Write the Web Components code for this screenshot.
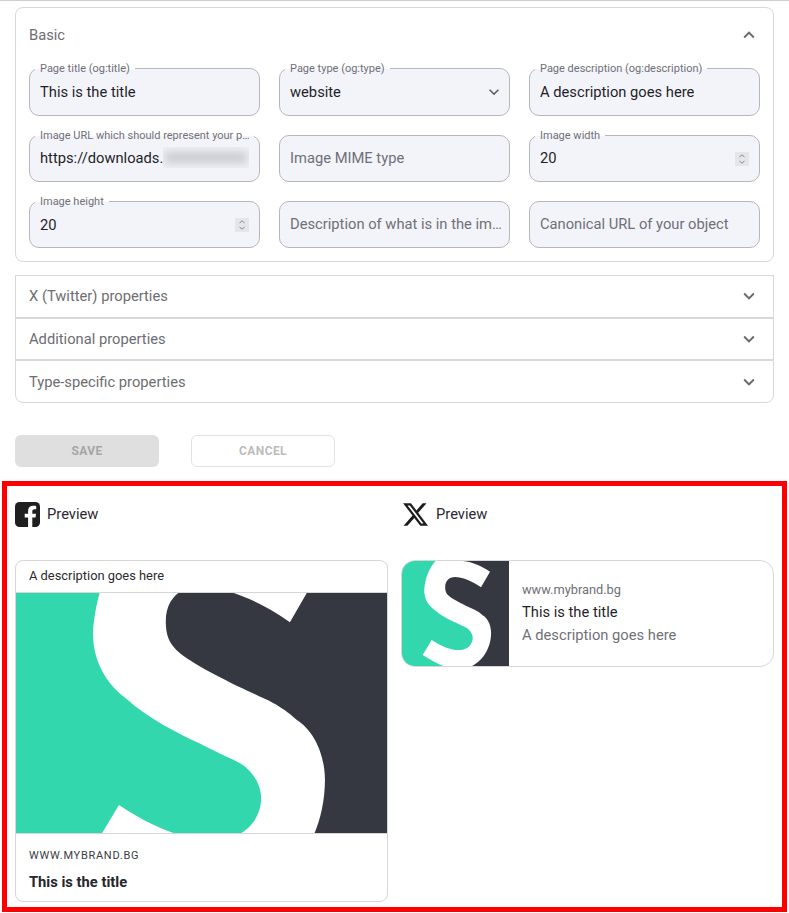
<!DOCTYPE html>
<html lang="en">
<head>
<meta charset="utf-8">
<title>Open Graph settings</title>
<style>
    body {
        margin: 0;
        background: #fff;
        color: #1f1f28;
        font-family: Roboto, "Liberation Sans", sans-serif;
        border-top: 1px solid #cfcfcf;
    }
</style>
</head>
<body>
<og-form>
    <og-panel heading="Basic" open class="solo">
        <og-grid>
            <og-field label="Page title (og:title)" value="This is the title"></og-field>
            <og-field label="Page type (og:type)" value="website" kind="select"></og-field>
            <og-field label="Page description (og:description)" value="A description goes here"></og-field>
            <og-field label="Image URL which should represent your page" value="https://downloads." kind="blurred"></og-field>
            <og-field placeholder="Image MIME type"></og-field>
            <og-field label="Image width" value="20" kind="number"></og-field>
            <og-field label="Image height" value="20" kind="number"></og-field>
            <og-field placeholder="Description of what is in the image"></og-field>
            <og-field placeholder="Canonical URL of your object"></og-field>
        </og-grid>
    </og-panel>
    <og-group>
        <og-panel heading="X (Twitter) properties"></og-panel>
        <og-panel heading="Additional properties"></og-panel>
        <og-panel heading="Type-specific properties" class="last"></og-panel>
    </og-group>
    <og-actions>
        <og-button kind="filled">SAVE</og-button>
        <og-button kind="outlined">CANCEL</og-button>
    </og-actions>
</og-form>
<og-previews>
    <og-preview network="facebook">
        <facebook-card url="WWW.MYBRAND.BG" card-title="This is the title" description="A description goes here"></facebook-card>
    </og-preview>
    <og-preview network="x">
        <x-card url="www.mybrand.bg" card-title="This is the title" description="A description goes here"></x-card>
    </og-preview>
</og-previews>

<script>
const CHEVRON_UP = "M12 8l-6 6 1.41 1.41L12 10.83l4.59 4.58L18 14z";
const CHEVRON_DOWN = "M16.59 8.59L12 13.17 7.41 8.59 6 10l6 6 6-6z";

// simple wrapper so the templates below stay short
function makeTemplate(html) {
    const template = document.createElement("template");
    template.innerHTML = html;
    return template;
}

class ShadowElement extends HTMLElement {
    constructor() {
        super();
        this.root = this.attachShadow({mode: "open"});
        this.root.appendChild(this.constructor.template.content.cloneNode(true));
    }
}

class OgForm extends ShadowElement {
    static template = makeTemplate(`
        <style>
            :host { display: block; margin: 6px 15px 0; }
        </style>
        <slot></slot>
    `);
}

class OgGroup extends ShadowElement {
    static template = makeTemplate(`
        <style>
            :host { display: block; margin-top: 13px; }
        </style>
        <slot></slot>
    `);
}

class OgPanel extends ShadowElement {
    static template = makeTemplate(`
        <style>
            :host {
                display: block;
                border: 1px solid #d8d8d8;
                background: #fff;
                height: 42.67px;
                box-sizing: border-box;
            }
            :host([open]) { height: 255px; padding-bottom: 13px; }
            :host(.solo) { border-radius: 8px; }
            :host(.last) { border-radius: 0 0 8px 8px; }
            header {
                display: flex;
                align-items: center;
                justify-content: space-between;
                box-sizing: border-box;
                height: 40.67px;
                padding: 1px 13px 0 13px;
                font-size: 14.72px;
                color: #6d6d72;
            }
            :host(:first-child) header { padding-top: 0; }
            :host([open]) header { height: 53px; margin-bottom: 7px; padding-top: 1px; }
            svg { width: 22px; height: 22px; fill: #68686d; }
            .body { display: none; padding: 0 13px; }
            :host([open]) .body { display: block; }
        </style>
        <header><span id="heading"></span><svg viewBox="0 0 24 24"><path id="chevron"></path></svg></header>
        <div class="body"><slot></slot></div>
    `);

    connectedCallback() {
        this.root.getElementById("heading").textContent = this.getAttribute("heading");
        this.root.getElementById("chevron").setAttribute("d", this.hasAttribute("open") ? CHEVRON_UP : CHEVRON_DOWN);
    }
}

class OgGrid extends ShadowElement {
    static template = makeTemplate(`
        <style>
            :host {
                display: grid;
                grid-template-columns: repeat(3, 231px);
                grid-template-rows: 48px 47px 47px;
                gap: 19px;
            }
        </style>
        <slot></slot>
    `);
}

class OgField extends ShadowElement {
    static template = makeTemplate(`
        <style>
            :host {
                display: flex;
                align-items: center;
                position: relative;
                box-sizing: border-box;
                padding: 0 10px;
                background: #f3f4fa;
                border: 1px solid #b6b6bd;
                border-radius: 10px;
                font-size: 14.72px;
                min-width: 0;
            }
            /* placeholders and the middle row sit a pixel higher */
            :host(:not([value])), :host(:nth-child(4)), :host(:nth-child(6)) { padding-bottom: 2px; }
            :host(:not([value])) { padding-right: 7px; }
            .label {
                position: absolute;
                top: -7px;
                left: 5px;
                max-width: calc(100% - 10px);
                box-sizing: border-box;
                padding: 0 5px;
                font-size: 11px;
                line-height: 13px;
                color: #6f6f78;
                white-space: nowrap;
                overflow: hidden;
                text-overflow: ellipsis;
                background: linear-gradient(#fff 7px, #f3f4fa 7px);
            }
            :host(:nth-child(4)) .label { padding-right: 1px; }
            .label:empty { display: none; }
            .text {
                flex: 0 1 auto;
                white-space: nowrap;
                overflow: hidden;
                text-overflow: ellipsis;
                color: #1f1f28;
            }
            :host([kind="blurred"]) .text { flex: none; }
            .text.placeholder { color: #6f6f78; }
            .blur {
                display: none;
                flex: 1 1 0;
                min-width: 0;
                height: 21px;
                overflow: hidden;
                background: #eff0f4;
            }
            .blur i {
                display: block;
                height: 11px;
                margin: 5px 2px 0;
                background: #c9cad0;
                filter: blur(4px);
            }
            :host([kind="blurred"]) .blur { display: block; }
            .spin {
                display: none;
                position: absolute;
                right: 10px;
                top: 50%;
                margin-top: -7px;
                width: 14px;
                height: 14px;
                background: #e6e6ea;
            }
            :host([kind="number"]) .spin { display: block; }
            .select {
                display: none;
                position: absolute;
                right: 5px;
                top: 50%;
                margin-top: -10px;
                width: 20px;
                height: 20px;
                fill: #606065;
            }
            :host([kind="select"]) .select { display: block; }
        </style>
        <span class="label" id="label"></span>
        <span class="text" id="text"></span>
        <span class="blur"><i></i></span>
        <svg class="spin" viewBox="0 0 14 14" fill="none" stroke="#85858b" stroke-width="1">
            <path d="M4.5 5.2L7 2.7l2.5 2.5M4.5 8.8L7 11.3l2.5-2.5"></path>
        </svg>
        <svg class="select" viewBox="0 0 24 24"><path d="${CHEVRON_DOWN}"></path></svg>
    `);

    connectedCallback() {
        const text = this.root.getElementById("text");
        this.root.getElementById("label").textContent = this.getAttribute("label") || "";
        if (this.hasAttribute("value")) {
            text.textContent = this.getAttribute("value");
        } else {
            text.textContent = this.getAttribute("placeholder");
            text.classList.add("placeholder");
        }
    }
}

class OgActions extends ShadowElement {
    static template = makeTemplate(`
        <style>
            :host { display: flex; gap: 32px; margin-top: 32px; }
        </style>
        <slot></slot>
    `);
}

class OgButton extends ShadowElement {
    static template = makeTemplate(`
        <style>
            :host {
                display: flex;
                align-items: center;
                justify-content: center;
                box-sizing: border-box;
                width: 144px;
                height: 32px;
                border-radius: 6px;
                font-size: 12px;
                font-weight: 700;
                letter-spacing: .4px;
            }
            :host([kind="filled"]) { background: #dfdfdf; color: #a6a6a6; }
            :host([kind="outlined"]) { background: #fff; border: 1px solid #e2e2e2; color: #bcbcbc; }
        </style>
        <slot></slot>
    `);
}

class OgPreviews extends ShadowElement {
    static template = makeTemplate(`
        <style>
            :host {
                display: grid;
                grid-template-columns: 373px 373px;
                gap: 13px;
                box-sizing: border-box;
                height: 431px;
                margin: 14px 2px 0;
                padding: 15px 8px 0;
                border: 5px solid #f00;
            }
        </style>
        <slot></slot>
    `);
}

class OgPreview extends ShadowElement {
    static template = makeTemplate(`
        <style>
            :host { display: block; min-width: 0; }
            header {
                display: flex;
                align-items: center;
                gap: 7px;
                height: 26px;
                margin-bottom: 33px;
                padding-top: 1px;
                box-sizing: border-box;
                font-size: 14.72px;
                color: #2a2a30;
            }
            svg { display: none; flex: none; width: 25px; height: 25px; }
            :host([network="facebook"]) .fb { display: block; }
            :host([network="x"]) .x { display: block; margin: 0 1px 0 2px; }
        </style>
        <header>
            <svg class="fb" viewBox="0 0 25 25">
                <rect width="25" height="25" rx="4.5" fill="#1f1f1f"></rect>
                <path fill="#fff" d="M17.3 25v-9.4h3.2l.6-3.8h-3.8V9.4c0-1.1.5-2.1 2.2-2.1h1.7V4c-.9-.1-2-.3-3.1-.3-3 0-5 1.800-5 5.100v3H9.700v3.800h3.400V25z"></path>
            </svg>
            <svg class="x" viewBox="1.200 2.200 21.600 19.600">
                <path fill="#1c1c1c" d="M18.244 2.250h3.308l-7.227 8.260 8.502 11.240H16.170l-5.214-6.817L4.990 21.750H1.680l7.730-8.835L1.254 2.250H8.080l4.713 6.231zm-1.161 17.520h1.833L7.084 4.126H5.117z"></path>
            </svg>
            <span>Preview</span>
        </header>
        <slot></slot>
    `);
}

// the logo is traced once at the size of the small card, the big one just crops it
class BrandLogo extends HTMLElement {
    constructor() {
        super();
        this.root = this.attachShadow({mode: "open"});
    }

    connectedCallback() {
        const view = this.getAttribute("view") || "0 0 107 105";
        const blur = this.getAttribute("blur") || "0.2";
        this.root.innerHTML = `
            <style>
                :host { display: block; overflow: hidden; }
                svg { display: block; width: 100%; height: 100%; }
            </style>
            <svg viewBox="${view}" preserveAspectRatio="xMidYMid slice" aria-hidden="true">
                <filter id="soft" x="-5%" y="-5%" width="110%" height="110%"><feGaussianBlur stdDeviation="${blur}"></feGaussianBlur></filter>
                <g filter="url(#soft)">
                    <rect x="-5" y="-5" width="117" height="115" fill="#33d7ae"></rect>
                    <path fill="#363941" d="M52-5H112V110H60L80 70 70 55 35 35 32 20Z"></path>
                    <path fill="#fff" d="M38-5C30 3 24 12 22.300 27.600C21.500 38 27 45 32 48.500C38 54 47 58.500 53 61.300C58 64 62 65.500 64.600 67C68 69 70.700 73 70.700 77.100C70.700 83 66 89 58 89C50 89.500 40 86 29.700 79L20.700 94C27 98 34 102 43 106V110H62V106H68C80 101 89 88 89.100 71.800C89 63 85 57 81 54.500C76 50 72 48.500 70.400 47.800C62 44 52 39 47.300 35.300C44 32.500 43.200 30 43.200 26C43.200 20 47 16 53 16C60 16 70 20 79 26.300L88 10.700C80 5.500 71 1 61 0V-5Z"></path>
                </g>
            </svg>
        `;
    }
}

class FacebookCard extends ShadowElement {
    static template = makeTemplate(`
        <style>
            :host {
                display: block;
                box-sizing: border-box;
                height: 342px;
                border: 1px solid #d6d6d6;
                border-radius: 8px;
                overflow: hidden;
                background: #fff;
                color: #2a2a30;
            }
            .top {
                height: 31px;
                padding-left: 13px;
                line-height: 30px;
                font-size: 12.88px;
                border-bottom: 1px solid #d6d6d6;
            }
            brand-logo { width: 371px; height: 240px; }
            .bottom {
                border-top: 1px solid #d6d6d6;
                padding: 15px 13px 0;
            }
            .url { font-size: 11px; line-height: 13px; letter-spacing: .72px; color: #3c3c44; }
            .title { margin-top: 12px; font-size: 14.72px; line-height: 17px; font-weight: 700; color: #26262c; }
        </style>
        <div class="top" id="description"></div>
        <brand-logo view="0 17.900 107 69.200" blur="0.2"></brand-logo>
        <div class="bottom">
            <div class="url" id="url"></div>
            <div class="title" id="title"></div>
        </div>
    `);

    connectedCallback() {
        this.root.getElementById("description").textContent = this.getAttribute("description");
        this.root.getElementById("url").textContent = this.getAttribute("url");
        this.root.getElementById("title").textContent = this.getAttribute("card-title");
    }
}

class XCard extends ShadowElement {
    static template = makeTemplate(`
        <style>
            :host {
                display: flex;
                box-sizing: border-box;
                height: 107px;
                border: 1px solid #d6d6d6;
                border-radius: 14px;
                overflow: hidden;
                background: #fff;
            }
            brand-logo { flex: none; width: 107px; height: 105px; }
            .text {
                display: flex;
                flex-direction: column;
                justify-content: center;
                gap: 5px;
                padding-left: 13px;
            }
            .url { font-size: 12.8px; line-height: 16px; color: #6f6f78; }
            .title { font-size: 14.72px; line-height: 18px; color: #1f1f28; }
            .description { font-size: 14.72px; line-height: 18px; color: #717178; }
        </style>
        <brand-logo></brand-logo>
        <div class="text">
            <div class="url" id="url"></div>
            <div class="title" id="title"></div>
            <div class="description" id="description"></div>
        </div>
    `);

    connectedCallback() {
        this.root.getElementById("description").textContent = this.getAttribute("description");
        this.root.getElementById("url").textContent = this.getAttribute("url");
        this.root.getElementById("title").textContent = this.getAttribute("card-title");
    }
}

window.customElements.define("og-form", OgForm);
window.customElements.define("og-group", OgGroup);
window.customElements.define("og-panel", OgPanel);
window.customElements.define("og-grid", OgGrid);
window.customElements.define("og-field", OgField);
window.customElements.define("og-actions", OgActions);
window.customElements.define("og-button", OgButton);
window.customElements.define("og-previews", OgPreviews);
window.customElements.define("og-preview", OgPreview);
window.customElements.define("brand-logo", BrandLogo);
window.customElements.define("facebook-card", FacebookCard);
window.customElements.define("x-card", XCard);
</script>
</body>
</html>
